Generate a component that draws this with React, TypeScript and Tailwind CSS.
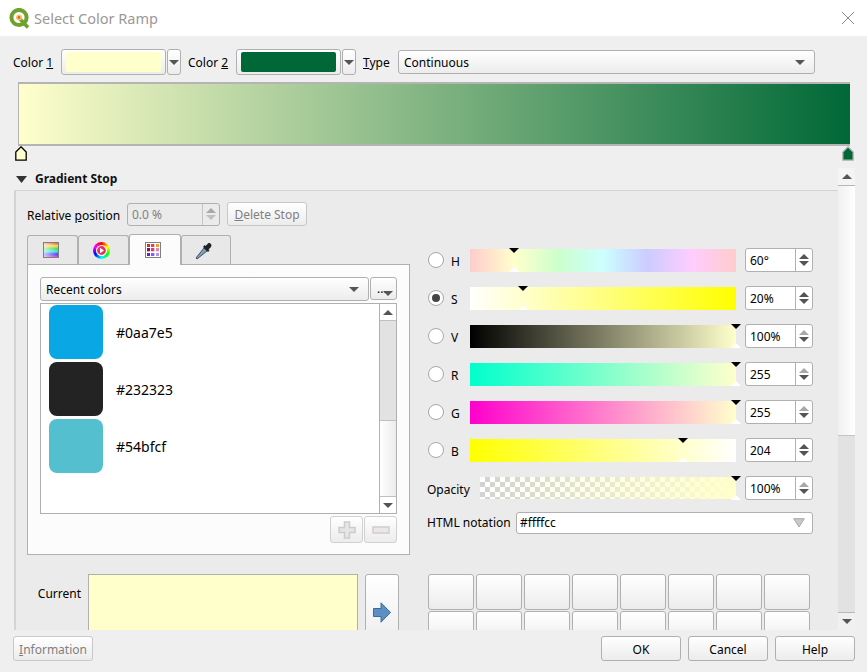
import { ReactNode } from 'react';

const btn = 'border border-[#b0b0b0] rounded-[3px] bg-gradient-to-b from-white to-[#ececec]';

const Caret = ({ color = '#555555', up = false, className = '' }: { color?: string; up?: boolean; className?: string }) => (
  <svg width="10" height="5" viewBox="0 0 10 5" className={className}>
    <path d={up ? 'M5 0L10 5H0Z' : 'M0 0H10L5 5Z'} fill={color} />
  </svg>
);

const Drop = () => (
  <div className={`${btn} w-[14px] h-[26px] ml-px flex items-center justify-center`}>
    <Caret />
  </div>
);

const Swatch = ({ className }: { className: string }) => (
  <div className={`${btn} w-[105px] h-[26px] flex items-center justify-center`}>
    <div className={`w-[95px] h-[20px] rounded-[2px] ${className}`}></div>
  </div>
);

const Combo = ({ className, children }: { className: string; children: ReactNode }) => (
  <div className={`${btn} ${className} flex items-center justify-between pl-[5px] pr-[9px]`}>
    <span className="pt-[2px]">{children}</span>
    <Caret />
  </div>
);

const Spin = ({ value, up = true, down = true }: { value: string; up?: boolean; down?: boolean }) => (
  <div className="w-[68px] h-[24px] ml-[9px] bg-white border border-[#b0b0b0] rounded-[3px] flex items-center">
    <span className="flex-1 pl-[4px] pt-[2px]">{value}</span>
    <div className="w-[17px] h-full border-l border-[#b0b0b0] flex flex-col items-center justify-center gap-[2px]">
      <Caret up color={up ? '#555555' : '#a8a8a8'} />
      <Caret color={down ? '#555555' : '#a8a8a8'} />
    </div>
  </div>
);

const Markers = ({ left }: { left: number }) => (
  <>
    <svg width="10" height="5" viewBox="0 0 10 5" className="absolute top-0" style={{ left: left - 5 }}>
      <path d="M0 0H10L5 5Z" fill="#000000" />
    </svg>
    <svg width="10" height="5" viewBox="0 0 10 5" className="absolute bottom-0" style={{ left: left - 5 }}>
      <path d="M5 0L10 5H0Z" fill="#ffffff" />
    </svg>
  </>
);

const sliders = [
  { name: 'H', at: 44, value: '60°', up: true, down: true, checked: false, bg: 'bg-[linear-gradient(to_right,#ffcccc,#ffffcc_16.6%,#ccffcc_33.3%,#ccffff_50%,#ccccff_66.6%,#ffccff_83.3%,#ffcccc)]' },
  { name: 'S', at: 53, value: '20%', up: true, down: true, checked: true, bg: 'bg-[linear-gradient(to_right,#ffffff,#ffff00)]' },
  { name: 'V', at: 266, value: '100%', up: false, down: true, checked: false, bg: 'bg-[linear-gradient(to_right,#000000,#ffffcc)]' },
  { name: 'R', at: 266, value: '255', up: false, down: true, checked: false, bg: 'bg-[linear-gradient(to_right,#00ffcc,#ffffcc)]' },
  { name: 'G', at: 266, value: '255', up: false, down: true, checked: false, bg: 'bg-[linear-gradient(to_right,#ff00cc,#ffffcc)]' },
  { name: 'B', at: 213, value: '204', up: true, down: true, checked: false, bg: 'bg-[linear-gradient(to_right,#ffff00,#ffffff)]' },
];

const recent = [
  { hex: '#0aa7e5', bg: 'bg-[#0aa7e5]' },
  { hex: '#232323', bg: 'bg-[#232323]' },
  { hex: '#54bfcf', bg: 'bg-[#54bfcf]' },
];

const paletteColors = ['#e0242c', '#c85050', '#f0a020', '#901040', '#d04090', '#f080a8', '#6020d0', '#8060f0', '#a898f0'];

const QgisLogo = () => (
  <svg width="21" height="21" viewBox="0 0 21 21" className="ml-[9px]">
    <circle cx="10" cy="9.5" r="7.6" fill="#ffffff" stroke="#6fa12f" strokeWidth="4" />
    <path d="M11 11L19 19.5" stroke="#6fa12f" strokeWidth="3.6" />
    <circle cx="10" cy="9.5" r="3" fill="#f6c66a" />
    <circle cx="10" cy="9.5" r="1.4" fill="#e8622c" />
  </svg>
);

const Eyedropper = () => (
  <svg width="18" height="20" viewBox="0 0 18 20">
    <path d="M2 19L1 18L9 8L12 11Z" fill="#7f9fc0" stroke="#44505c" strokeWidth="1" />
    <path d="M8 7L13 12L14.5 10.5L13.5 9.5L16 7C17.5 5 15 2 13 3.5L10.5 6L9.5 5Z" fill="#1f2428" />
  </svg>
);

const Tab = ({ width, active = false, children }: { width: string; active?: boolean; children: ReactNode }) => (
  <div
    className={`${width} pr-[4px] flex items-center justify-center border-t border-x border-[#b0b0b0] rounded-t-[3px] ${
      active ? 'h-[31px] bg-[#fcfcfc] relative z-10 -mb-px' : 'h-[29px] bg-[#e8e8e8]'
    }`}
  >
    {children}
  </div>
);

export default function App() {
  return (
    <div className="w-[867px] h-[672px] flex flex-col overflow-hidden bg-[#efefef] text-[12px] leading-[18px] text-black font-['Noto_Sans',sans-serif]">
      {/* title bar */}
      <div className="h-[36px] shrink-0 bg-white flex items-center">
        <QgisLogo />
        <span className="ml-[4px] text-[14.5px] text-[#999999]">Select Color Ramp</span>
        <svg width="14" height="14" viewBox="0 0 14 14" className="ml-auto mr-[12px]">
          <path d="M1 1L13 13M13 1L1 13" stroke="#8a8a8a" strokeWidth="1" />
        </svg>
      </div>

      {/* ramp options */}
      <div className="mt-[13px] h-[26px] pl-[13px] flex items-center shrink-0">
        <span className="w-[48px] pt-[2px]">Color <span className="underline">1</span></span>
        <Swatch className="bg-[#ffffcc]" />
        <Drop />
        <span className="w-[48px] ml-[7px] pt-[2px]">Color <span className="underline">2</span></span>
        <Swatch className="bg-[#006837]" />
        <Drop />
        <span className="w-[35px] ml-[7px] pt-[2px]"><span className="underline">T</span>ype</span>
        <Combo className="w-[417px] h-[24px]">Continuous</Combo>
      </div>

      <div className="mt-[7px] ml-[18px] w-[832px] h-[64px] shrink-0 border-2 border-[#b4b4b4] border-l border-r-0 bg-[linear-gradient(to_right,#ffffcc,#006837)]"></div>

      <div className="ml-[15px] w-[839px] h-[16px] shrink-0 flex justify-between items-start">
        <svg width="12" height="15" viewBox="0 0 12 15">
          <path d="M6 .8L11.2 6V14.2H.8V6Z" fill="#ffffcc" stroke="#000000" strokeWidth="1.3" />
        </svg>
        <svg width="12" height="15" viewBox="0 0 12 15">
          <path d="M6 .8L11.2 6V14.2H.8V6Z" fill="#006837" stroke="#b8b8b8" strokeWidth="1.3" />
        </svg>
      </div>

      {/* scrolling area */}
      <div className="mt-[6px] h-[462px] shrink-0 pl-[14px] flex">
        <div className="w-[824px] h-full flex flex-col overflow-hidden">
          <div className="h-[22px] shrink-0 flex items-center">
            <svg width="11" height="7" viewBox="0 0 11 7" className="ml-[2px]">
              <path d="M0 0H11L5.5 7Z" fill="#333333" />
            </svg>
            <span className="ml-[8px] font-bold text-[#111111]">Gradient Stop</span>
          </div>

          <div className="flex-1 flex border-l-2 border-t border-[#d4d4d4] bg-[#ebebeb] pl-[11px] pt-[11px]">
            {/* left column */}
            <div className="w-[383px] shrink-0 flex flex-col">
              <div className="h-[24px] flex items-center">
                <span className="w-[100px] pt-[3px]">Relative <span className="underline">p</span>osition</span>
                <div className="w-[93px] h-[23px] border border-[#b0b0b0] rounded-[3px] flex items-center text-[#808080]">
                  <span className="flex-1 pl-[4px] pt-[2px]">0.0 %</span>
                  <div className="w-[17px] h-full border-l border-[#c4c4c4] flex flex-col items-center justify-center gap-[2px]">
                    <Caret up color="#a8a8a8" />
                    <Caret color="#c0c0c0" />
                  </div>
                </div>
                <div className={`${btn} ml-[7px] w-[80px] h-[24px] pt-[2px] flex items-center justify-center text-[#808080] border-[#c8c8c8]`}>
                  <span><span className="underline">D</span>elete Stop</span>
                </div>
              </div>

              <div className="mt-[8px] h-[30px] flex items-end">
                <Tab width="w-[51px]">
                  <div className="w-[16px] h-[16px] border border-[#808080] bg-[linear-gradient(to_right,#ffffffb0,#ffffff00),linear-gradient(to_bottom,#ff4040,#ffe040,#40e040,#40e0e0,#4040ff,#e040e0)]"></div>
                </Tab>
                <Tab width="w-[51px]">
                  <div className="w-[17px] h-[17px] rounded-full bg-[conic-gradient(#ff0000,#ffff00,#00ff00,#00ffff,#0000ff,#ff00ff,#ff0000)] flex items-center justify-center">
                    <svg width="11" height="11" viewBox="0 0 11 11">
                      <circle cx="5.5" cy="5.5" r="5.5" fill="#ffffff" />
                      <circle cx="5.5" cy="5.5" r="4.4" fill="#e83060" />
                      <path d="M4 2.8L8 5.5L4 8.2Z" fill="#ffffff" />
                    </svg>
                  </div>
                </Tab>
                <Tab width="w-[52px]" active>
                  <div className="w-[16px] h-[16px] border border-[#808080] bg-white grid grid-cols-3 gap-px p-px">
                    {paletteColors.map((c) => (
                      <svg key={c} viewBox="0 0 4 4" className="w-full h-full">
                        <rect width="4" height="4" fill={c} />
                      </svg>
                    ))}
                  </div>
                </Tab>
                <Tab width="w-[50px]">
                  <Eyedropper />
                </Tab>
              </div>

              <div className="h-[291px] shrink-0 border border-[#b0b0b0] bg-[#fcfcfc] px-[12px] pt-[12px] flex flex-col">
                <div className="flex h-[24px]">
                  <Combo className="w-[329px] h-[24px]">Recent colors</Combo>
                  <div className={`${btn} ml-px w-[27px] h-[23px] relative`}>
                    <span className="absolute left-[6px] top-[4px] leading-[14px]">...</span>
                    <Caret className="absolute right-[3px] bottom-[3px]" />
                  </div>
                </div>

                <div className="mt-[2px] w-[357px] h-[211px] shrink-0 border border-[#b0b0b0] bg-white flex">
                  <div className="flex-1 pl-[8px] pt-px flex flex-col gap-[3px]">
                    {recent.map((r) => (
                      <div key={r.hex} className="flex items-center">
                        <div className={`w-[54px] h-[54px] rounded-[8px] ${r.bg}`}></div>
                        <span className="ml-[13px] pt-[2px] text-[14px]">{r.hex}</span>
                      </div>
                    ))}
                  </div>
                  <div className="w-[17px] border-l border-[#b0b0b0] flex flex-col">
                    <div className="h-[17px] border-b border-[#c0c0c0] flex items-center justify-center">
                      <Caret up />
                    </div>
                    <div className="h-[100px] border-b border-[#c0c0c0] bg-[#e2e2e2]"></div>
                    <div className="flex-1 bg-gradient-to-r from-white to-[#ececec]"></div>
                    <div className="h-[17px] border-t border-[#c0c0c0] flex items-center justify-center">
                      <Caret />
                    </div>
                  </div>
                </div>

                <div className="mt-[2px] flex justify-end gap-px">
                  <div className={`${btn} w-[33px] h-[27px] border-[#d0d0d0] flex items-center justify-center`}>
                    <svg width="18" height="18" viewBox="0 0 18 18">
                      <path d="M6.5 1H11.5V6.5H17V11.5H11.5V17H6.5V11.5H1V6.5H6.5Z" fill="#e6e6e6" stroke="#cccccc" strokeWidth="1.5" />
                    </svg>
                  </div>
                  <div className={`${btn} w-[33px] h-[27px] border-[#d0d0d0] flex items-center justify-center`}>
                    <svg width="18" height="8" viewBox="0 0 18 8">
                      <rect x="1" y="1" width="16" height="6" fill="#ece6e6" stroke="#d4cccc" strokeWidth="1.5" />
                    </svg>
                  </div>
                </div>
              </div>

              <div className="mt-[19px] flex items-start">
                <span className="w-[54px] mt-[11px] text-right">Current</span>
                <div className="ml-[7px] w-[270px] h-[76px] border border-[#b0b0b0] bg-[#ffffcc]"></div>
                <div className={`${btn} ml-[7px] w-[34px] h-[76px] flex items-center justify-center`}>
                  <svg width="18" height="21" viewBox="0 0 18 21">
                    <path d="M.5 6.5H8V.8L17.5 10.5L8 20.2V14.5H.5Z" fill="#5c8fc4" stroke="#3f6a96" strokeWidth="1" />
                  </svg>
                </div>
              </div>
            </div>

            {/* right column */}
            <div className="ml-[17px] mt-[46px] w-[386px] flex flex-col">
              <div className="flex flex-col gap-[14px]">
                {sliders.map((s) => (
                  <div key={s.name} className="h-[24px] flex items-center">
                    <div className="ml-px w-[16px] h-[16px] rounded-full border border-[#a8a8a8] bg-white flex items-center justify-center">
                      {s.checked && <div className="w-[8px] h-[8px] rounded-full bg-[#444444]"></div>}
                    </div>
                    <span className="ml-[7px] w-[19px] mt-[4px]">{s.name}</span>
                    <div className="relative w-[266px] h-[24px] pt-px">
                      <div className={`h-[23px] ${s.bg}`}></div>
                      <Markers left={s.at} />
                    </div>
                    <Spin value={s.value} up={s.up} down={s.down} />
                  </div>
                ))}
                <div className="h-[24px] flex items-center">
                  <span className="w-[53px] mt-[4px]">Opacity</span>
                  <div className="relative w-[256px] h-[24px] pt-px">
                    <div className="h-[22px] bg-[repeating-conic-gradient(#d2d2d2_0_25%,#ffffff_0_50%)] bg-[length:10px_10px]">
                      <div className="h-full bg-[linear-gradient(to_right,#ffffcc00,#ffffcc)]"></div>
                    </div>
                    <Markers left={256} />
                  </div>
                  <Spin value="100%" up={false} />
                </div>
              </div>

              <div className="mt-[11px] h-[23px] flex items-center">
                <span className="w-[89px] pt-px">HTML notation</span>
                <div className="w-[297px] h-[22px] bg-white border border-[#b0b0b0] rounded-[3px] flex items-center justify-between pl-[3px] pr-[7px]">
                  <span className="pt-px">#ffffcc</span>
                  <svg width="12" height="10" viewBox="0 0 12 10">
                    <path d="M.7 .7H11.3L6 9Z" fill="#c8c8c8" stroke="#a8a8a8" strokeWidth="1" />
                  </svg>
                </div>
              </div>

              <div className="mt-[40px] ml-px grid grid-cols-[repeat(8,46px)] gap-x-[2px] gap-y-px auto-rows-[36px]">
                {Array.from({ length: 16 }).map((_, i) => (
                  <div key={i} className={btn}></div>
                ))}
              </div>
            </div>
          </div>
        </div>

        {/* outer scrollbar */}
        <div className="w-[17px] h-full flex flex-col bg-[#e2e2e2]">
          <div className="h-[18px] bg-[#f4f4f4] border-b border-[#b8b8b8] flex items-center justify-center">
            <Caret up />
          </div>
          <div className="h-[250px] border-b border-[#c4c4c4] bg-gradient-to-r from-[#f0f0f0] to-white"></div>
          <div className="flex-1"></div>
          <div className="h-[18px] bg-[#f0f0f0] border-t border-[#b8b8b8] flex items-center justify-center">
            <Caret />
          </div>
        </div>
      </div>

      {/* dialog buttons */}
      <div className="pt-[6px] pl-[13px] pr-[12px] flex">
        <div className={`${btn} w-[80px] h-[25px] pt-[2px] border-[#c8c8c8] flex items-center justify-center text-[#808080]`}>
          <span><span className="underline">I</span>nformation</span>
        </div>
        <div className="ml-auto flex gap-[7px]">
          {['OK', 'Cancel', 'Help'].map((label) => (
            <div key={label} className={`${btn} w-[80px] h-[25px] pt-[2px] flex items-center justify-center`}>
              {label}
            </div>
          ))}
        </div>
      </div>
    </div>
  );
}
